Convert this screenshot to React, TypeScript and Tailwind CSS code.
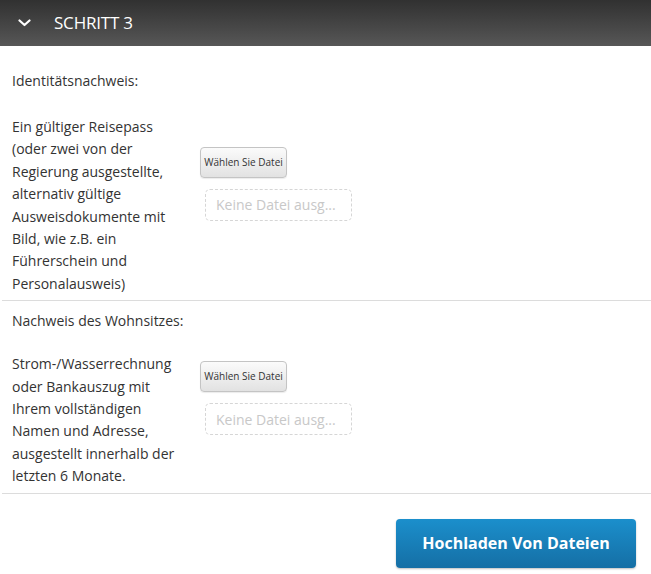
import React from 'react';

const FileField: React.FC = () => (
  <div className="flex flex-col items-start pb-[44px]">
    <button className="h-[31px] w-[87px] rounded-[4px] border border-[#c4c4c4] bg-gradient-to-b from-[#fbfbfb] to-[#e2e2e2] text-[10px] text-[#333] shadow-[0_1px_1px_rgba(0,0,0,0.08)]">
      Wählen Sie Datei
    </button>
    <div className="ml-[5px] mt-[11px] flex h-[32px] w-[147px] items-center rounded-[5px] border border-dashed border-[#d6d6d6] pl-[10px] text-[14px] text-[#c8c8c8]">
      Keine Datei ausg...
    </div>
  </div>
);

const Section: React.FC<{ label: string; lines: string[]; gap: string; top: string }> = ({ label, lines, gap, top }) => (
  <div className={`border-b border-[#dcdcdc] pb-[5px] pl-[10px] ${top}`}>
    <p className="leading-[22.4px]">{label}</p>
    <div className={`flex items-center ${gap}`}>
      <div className="w-[188px] leading-[22.4px]">
        {lines.map((l) => (
          <div key={l}>{l}</div>
        ))}
      </div>
      <FileField />
    </div>
  </div>
);

export default function App() {
  return (
    <div className="h-[574px] w-[651px] bg-white text-[14px] text-[#333] [font-family:'Open_Sans','Liberation_Sans',sans-serif]">
      <header className="flex h-[46px] items-center bg-gradient-to-b from-[#313131] to-[#575757] text-white">
        <svg className="ml-[18px]" width="13" height="8" viewBox="0 0 13 8" fill="none">
          <path d="M1.5 1.5 L6.5 6 L11.5 1.5" stroke="#fff" strokeWidth="2.2" strokeLinecap="round" strokeLinejoin="round" />
        </svg>
        <h2 className="ml-[23px] text-[17px] tracking-[-0.2px]">SCHRITT 3</h2>
      </header>

      <div className="ml-[2px]">
        <Section
          top="pt-[24px]"
          gap="mt-[23.6px]"
          label="Identitätsnachweis:"
          lines={[
            'Ein gültiger Reisepass',
            '(oder zwei von der',
            'Regierung ausgestellte,',
            'alternativ gültige',
            'Ausweisdokumente mit',
            'Bild, wie z.B. ein',
            'Führerschein und',
            'Personalausweis)',
          ]}
        />
        <Section
          top="pt-[9px]"
          gap="mt-[20.6px]"
          label="Nachweis des Wohnsitzes:"
          lines={[
            'Strom-/Wasserrechnung',
            'oder Bankauszug mit',
            'Ihrem vollständigen',
            'Namen und Adresse,',
            'ausgestellt innerhalb der',
            'letzten 6 Monate.',
          ]}
        />
      </div>

      <div className="flex justify-end pr-[15px] pt-[25px]">
        <button className="h-[49px] w-[240px] rounded-[4px] bg-gradient-to-b from-[#1b8fcc] to-[#156fa5] text-[16px] font-bold text-white shadow-[0_1px_2px_rgba(0,0,0,0.25)]">
          Hochladen Von Dateien
        </button>
      </div>
    </div>
  );
}
